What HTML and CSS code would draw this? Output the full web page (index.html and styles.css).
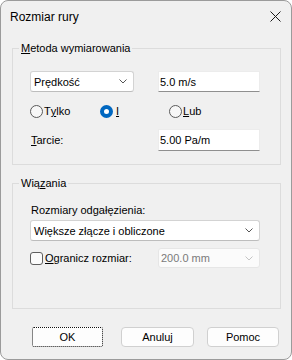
FILE: index.html
```html
<!DOCTYPE html>
<html lang="pl">
<head>
<meta charset="utf-8">
<title>Rozmiar rury</title>
<link rel="stylesheet" href="styles.css">
</head>
<body>
<div class="window">
  <div class="titlebar">
    <span class="title">Rozmiar rury</span>
    <svg class="close" width="11" height="11" viewBox="0 0 11 11"><path d="M0.5 0.5L10.5 10.5M10.5 0.5L0.5 10.5" stroke="#1b1b1b" stroke-width="1" fill="none"/></svg>
  </div>
  <div class="content">
    <fieldset class="group">
      <legend><u>M</u>etoda wymiarowania</legend>
      <div class="gbody g1">
        <div class="row r1">
          <div class="combo speed"><span>Prędkość</span><svg class="chev" width="8" height="5" viewBox="0 0 8 5"><polyline points="0.5,0.5 4,4 7.5,0.5" fill="none" stroke="#555" stroke-width="1"/></svg></div>
          <div class="edit">5.0 m/s</div>
        </div>
        <div class="row radios">
          <label class="radio w-tylko"><span class="rb"></span>T<u>y</u>lko</label>
          <label class="radio w-i"><span class="rb on"></span><u>I</u></label>
          <label class="radio"><span class="rb"></span><u>L</u>ub</label>
        </div>
        <div class="row r3">
          <span class="lbl"><u>T</u>arcie:</span>
          <div class="edit tall">5.00 Pa/m</div>
        </div>
      </div>
    </fieldset>
    <fieldset class="group g2wrap">
      <legend>Wią<u>z</u>ania</legend>
      <div class="gbody g2">
        <div class="lbl line">Rozmiary odgałęzienia:</div>
        <div class="combo wide"><span>Większe złącze i obliczone</span><svg class="chev" width="8" height="5" viewBox="0 0 8 5"><polyline points="0.5,0.5 4,4 7.5,0.5" fill="none" stroke="#555" stroke-width="1"/></svg></div>
        <div class="row r-check">
          <label class="check"><span class="cb"></span><u>O</u>granicz rozmiar:</label>
          <div class="combo disabled"><span>200.0 mm</span><svg class="chev" width="8" height="5" viewBox="0 0 8 5"><polyline points="0.5,0.5 4,4 7.5,0.5" fill="none" stroke="#c4c4c4" stroke-width="1"/></svg></div>
        </div>
      </div>
    </fieldset>
    <div class="buttons">
      <div class="btn ok">OK</div>
      <div class="btn cancel">Anuluj</div>
      <div class="btn help">Pomoc</div>
    </div>
  </div>
</div>
</body>
</html>
```
FILE: styles.css
```css
* { box-sizing: border-box; }
html, body { margin: 0; padding: 0; }
body {
  width: 292px;
  height: 360px;
  background: #ffffff;
  font-family: "Liberation Sans", Arial, sans-serif;
  font-size: 11px;
  color: #000;
}
.window {
  width: 292px;
  height: 360px;
  border: 1px solid #9b9b9b;
  border-radius: 8px;
  background: #f0f0f0;
  display: flex;
  flex-direction: column;
  overflow: hidden;
}
.titlebar {
  height: 31px;
  display: flex;
  align-items: center;
  justify-content: space-between;
  padding: 0 10px 0 9px;
  font-size: 12px;
}
.close { display: block; }
.content {
  padding: 8px 10px 0 11px;
  display: flex;
  flex-direction: column;
}
.group {
  margin: 0;
  padding: 0;
  border: 1px solid #dcdcdc;
  min-width: 0;
}
.group legend {
  margin-left: 6px;
  padding: 0 2px;
  line-height: 16px;
}
.g2wrap { margin-top: 10px; }
.gbody { display: flex; flex-direction: column; }
.g1 { padding: 15px 20px 13px 17px; }
.g2 { padding: 11px 20px 40px 17px; }
.row { display: flex; align-items: center; }
.r1 { justify-content: space-between; height: 21px; }
.combo {
  height: 21px;
  background: #fff;
  border: 1px solid #d3d3d3;
  border-bottom-color: #bdbdbd;
  border-radius: 3px;
  display: flex;
  align-items: center;
  justify-content: space-between;
  padding: 0 6px 0 3px;
}
.chev { display: block; }
.speed { width: 104px; }
.edit {
  width: 102px;
  height: 21px;
  background: #fff;
  border: 1px solid #ececec;
  border-bottom-color: #8f8f8f;
  display: flex;
  align-items: center;
  padding-left: 1px;
}
.edit.tall { height: 22px; }
.radios { margin-top: 11px; height: 16px; }
.radio { display: flex; align-items: center; }
.w-tylko { width: 70px; }
.w-i { width: 69px; }
.rb {
  width: 13px;
  height: 13px;
  border-radius: 50%;
  border: 1px solid #5a5a5a;
  background: #f7f7f7;
  margin-right: 1px;
}
.rb.on {
  border: 4px solid #0067c0;
  background: #fff;
  margin-right: 3px;
}
.r3 { margin-top: 10px; justify-content: space-between; }
.lbl { padding-left: 1px; }
.line { line-height: 16px; }
.wide { width: 230px; margin-top: 2px; }
.r-check { margin-top: 7px; height: 20px; justify-content: space-between; }
.check { display: flex; align-items: center; }
.cb {
  width: 13px;
  height: 13px;
  border: 1px solid #5f5f5f;
  border-radius: 3px;
  background: #fbfbfb;
  margin-right: 2px;
}
.disabled {
  width: 102px;
  height: 20px;
  background: #fbfbfb;
  border: 1px solid #e6e6e6;
  color: #7a7a7a;
  padding-left: 2px;
}
.buttons {
  margin-top: 18px;
  display: flex;
  padding-left: 20px;
}
.btn {
  height: 20px;
  background: #fdfdfd;
  border: 1px solid #d0d0d0;
  border-radius: 4px;
  display: flex;
  align-items: center;
  justify-content: center;
}
.ok { width: 71px; border: 1px dotted #111; border-radius: 2px; }
.cancel { width: 73px; margin-left: 18px; }
.help { width: 72px; margin-left: 13px; }
```
